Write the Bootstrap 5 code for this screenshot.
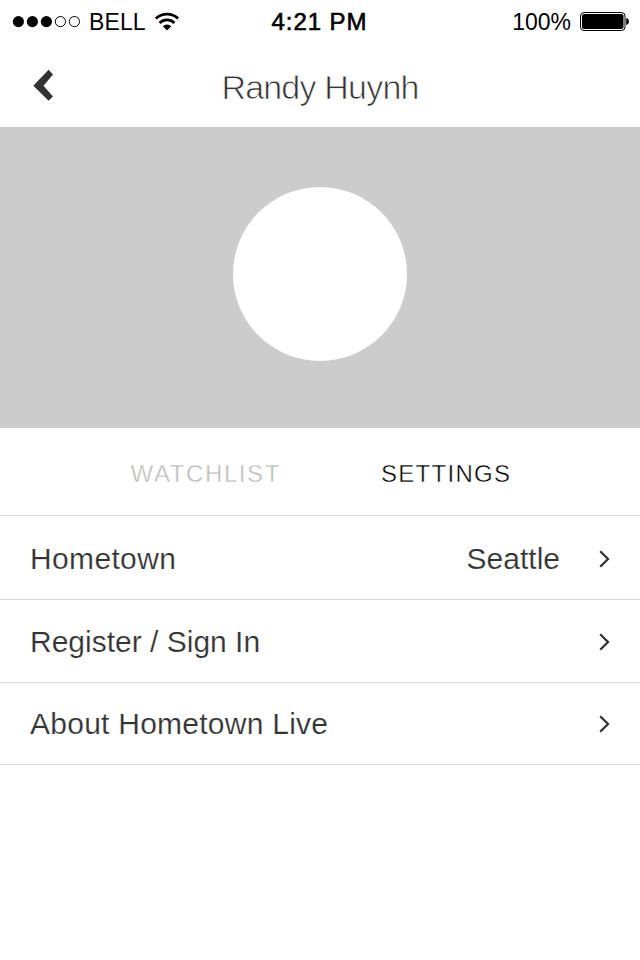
<!DOCTYPE html>
<html lang="en">
<head>
<meta charset="utf-8">
<meta name="viewport" content="width=device-width, initial-scale=1">
<title>Randy Huynh</title>
<link href="https://cdn.jsdelivr.net/npm/bootstrap@5.3.0/dist/css/bootstrap.min.css" rel="stylesheet">
<style>
body{font-family:"Liberation Sans",Arial,sans-serif;color:#333;background:#fff;height:960px;overflow:hidden}
svg{display:block;flex:none}
.status{height:44px;padding-left:12px;padding-right:10px;font-size:23px;line-height:44px;color:#000}
.status>div{flex:1 1 0}
.carrier{margin-left:7px;letter-spacing:.1px}
.wifi{margin-left:8px}
.clock{font-size:24px;letter-spacing:.95px;margin-right:3px;-webkit-text-stroke:.6px #000}
.level{letter-spacing:0;margin-right:9px}
.titlebar{height:83px;padding:0 30px}
.titlebar h1{font-size:34px;line-height:86px;letter-spacing:-.8px;padding-top:3px;-webkit-text-stroke:.75px #fff}
.side{width:30px}
.cover{height:301px;background:#ccc;padding-bottom:7px}
.avatar{width:174px;height:174px}
.tabs{height:88px;gap:100px;padding-left:2px;border-bottom:1px solid #dadada;font-size:24px;line-height:92px}
.tabs a{color:#000;-webkit-text-stroke:.4px #fff}
.tabs a.off{color:#bbb}
.watch{letter-spacing:1.6px}
.sett{letter-spacing:1.3px}
.entries .entry{height:83px;padding:2px 29px 0 30px;border:0;border-bottom:1px solid #dadada;color:#333;font-size:30px;line-height:1;-webkit-text-stroke:.2px #fff}
.entries .entry:first-child{height:84px}
.entries .entry:last-child{height:82px;padding-top:0;border-bottom:1px solid #dadada}
.hometown{letter-spacing:.35px}
.register{letter-spacing:0}
.about{letter-spacing:.25px}
.city{margin-right:39px}
</style>
</head>
<body>
<header>
  <div class="status d-flex align-items-center">
    <div class="d-flex align-items-center">
      <svg width="70" height="14" viewBox="0 0 70 14"><g fill="#000"><circle cx="6.4" cy="6.6" r="5.6"/><circle cx="20.4" cy="6.6" r="5.6"/><circle cx="34.4" cy="6.6" r="5.6"/></g><g fill="none" stroke="#000"><circle cx="48.4" cy="6.6" r="5.1"/><circle cx="62.4" cy="6.6" r="5.1"/></g></svg>
      <span class="carrier">BELL</span>
      <svg class="wifi" width="26" height="20" viewBox="0 0 26 20"><g fill="none" stroke="#000" stroke-width="2.7"><path d="M1.8 6.5a16.5 16.5 0 0 1 22.4 0"/><path d="M5.6 11a10.5 10.5 0 0 1 14.8 0"/></g><path d="M8.8 14.2a6.2 6.2 0 0 1 8.4 0L13 18.4z"/></svg>
    </div>
    <span class="clock">4:21 PM</span>
    <div class="d-flex align-items-center justify-content-end">
      <span class="level">100%</span>
      <svg width="50" height="20" viewBox="0 0 50 20"><rect x=".5" y=".5" width="44.5" height="18" rx="3.5" fill="none" stroke="#000"/><rect x="2" y="2" width="41.5" height="15" rx="2" fill="#000"/><path d="M46.2 6c3.6.6 3.6 6.3 0 7z"/></svg>
    </div>
  </div>
  <nav class="titlebar d-flex align-items-center justify-content-between">
    <a href="#" class="side" aria-label="Back"><svg width="30" height="36" viewBox="0 0 30 36"><path d="M18.6 1.4 3.3 17.3 18.6 32.4 23 28 13.5 17.3 23 6z" transform="translate(0 .4)" fill="#333"/></svg></a>
    <h1 class="m-0 fw-normal">Randy Huynh</h1>
    <span class="side"></span>
  </nav>
</header>
<main>
  <section class="cover d-flex align-items-center justify-content-center"><div class="avatar bg-white rounded-circle"></div></section>
  <nav class="tabs d-flex justify-content-center">
    <a href="#" class="off watch text-decoration-none">WATCHLIST</a>
    <a href="#" class="sett text-decoration-none">SETTINGS</a>
  </nav>
  <div class="entries list-group list-group-flush">
    <a href="#" class="entry list-group-item d-flex align-items-center"><span class="hometown me-auto">Hometown</span><span class="city">Seattle</span><svg width="12" height="18" viewBox="0 0 12 18"><path d="m1.2 1.3 7.8 7.7-7.8 7.7" fill="none" stroke="#333" stroke-width="2.3"/></svg></a>
    <a href="#" class="entry list-group-item d-flex align-items-center"><span class="register me-auto">Register / Sign In</span><svg width="12" height="18" viewBox="0 0 12 18"><path d="m1.2 1.3 7.8 7.7-7.8 7.7" fill="none" stroke="#333" stroke-width="2.3"/></svg></a>
    <a href="#" class="entry list-group-item d-flex align-items-center"><span class="about me-auto">About Hometown Live</span><svg width="12" height="18" viewBox="0 0 12 18"><path d="m1.2 1.3 7.8 7.7-7.8 7.7" fill="none" stroke="#333" stroke-width="2.3"/></svg></a>
  </div>
</main>
<script src="https://cdn.jsdelivr.net/npm/bootstrap@5.3.0/dist/js/bootstrap.bundle.min.js"></script>
</body>
</html>
